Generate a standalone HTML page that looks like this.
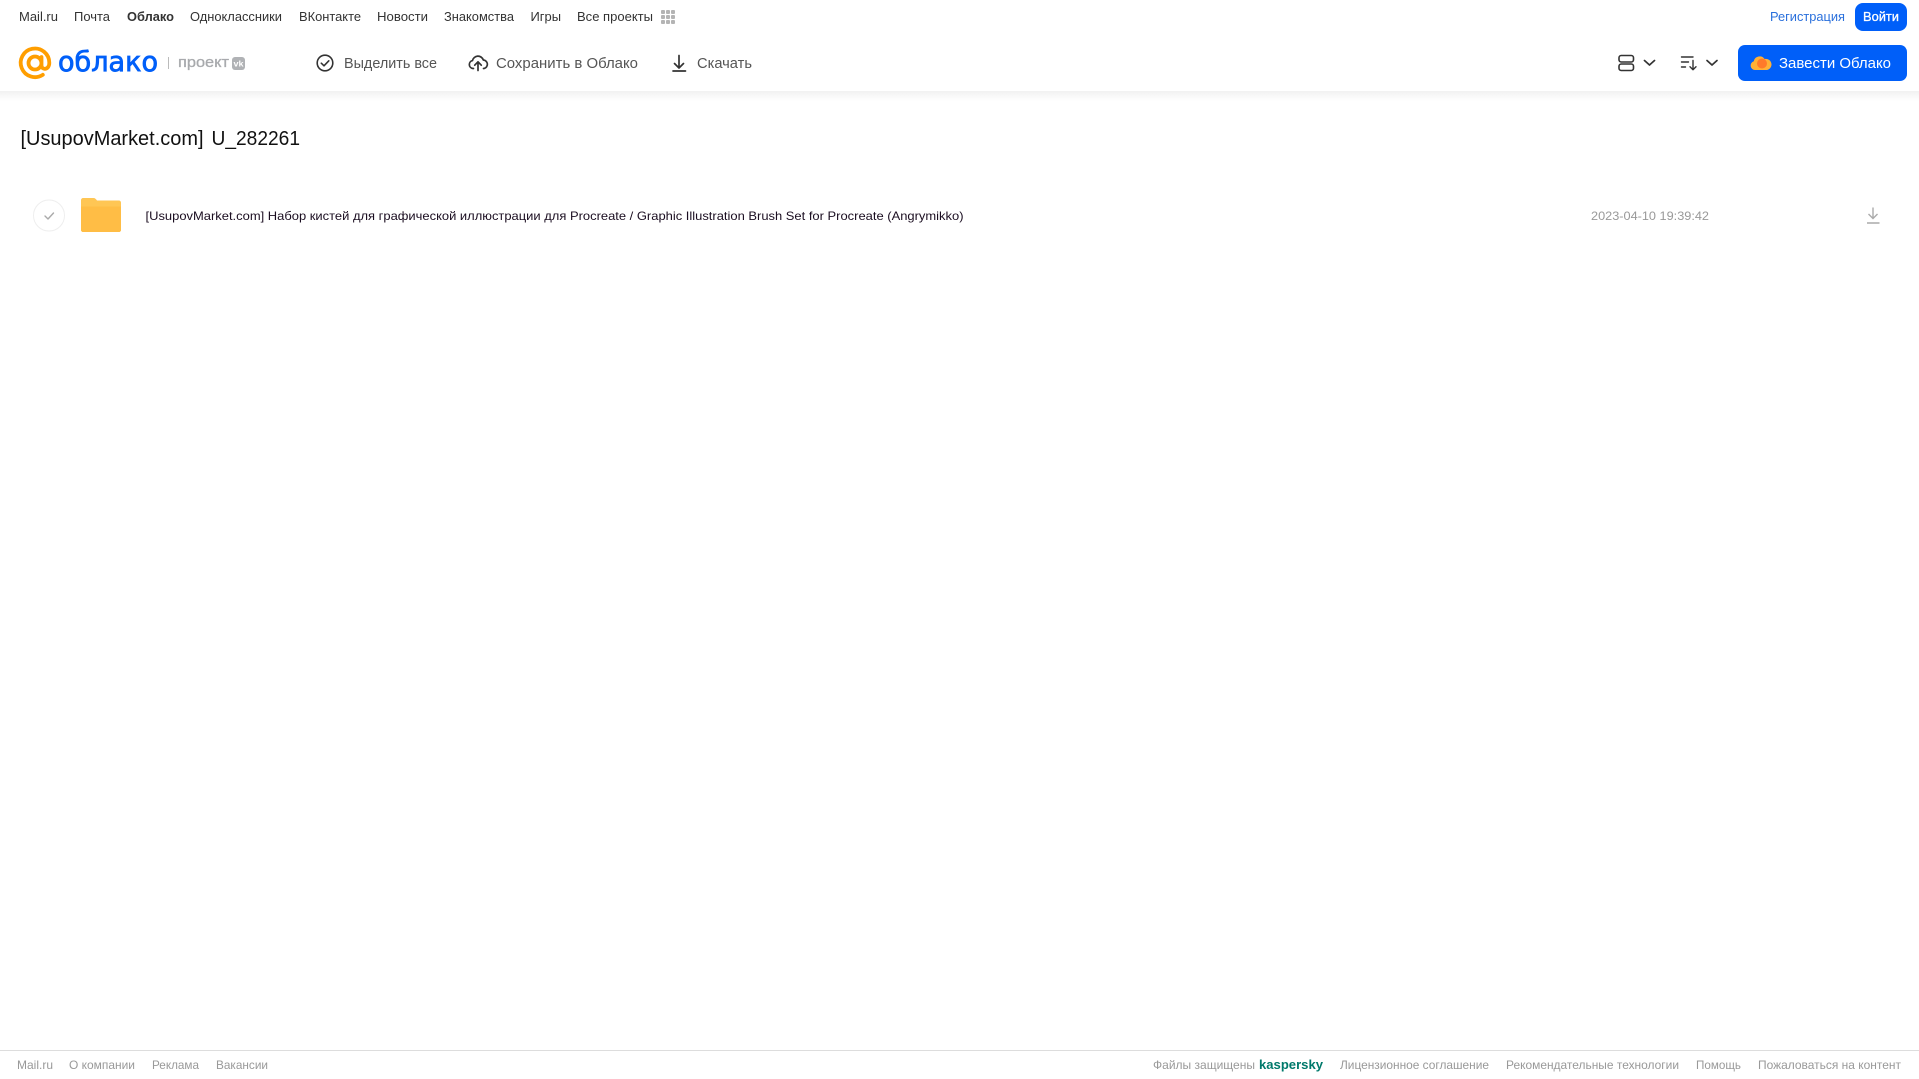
<!DOCTYPE html>
<html lang="ru"><head><meta charset="utf-8"><title>Облако</title>
<style>
html,body{margin:0;padding:0;background:#fff;width:1919px;height:1079px;overflow:hidden}
svg{display:block;position:absolute;left:0;top:0}
text{font-family:"Liberation Sans",sans-serif}
.n{font-size:13px;fill:#333}
.a{font-size:15px;fill:#555}
.f{font-size:12px;fill:#999}
</style></head><body>
<svg width="1919" height="1079" viewBox="0 0 1919 1079" xmlns="http://www.w3.org/2000/svg">
<defs><linearGradient id="s" x1="0" y1="0" x2="0" y2="1"><stop offset="0" stop-color="#f1f1f1"/><stop offset="1" stop-color="#fff"/></linearGradient></defs>
<rect x="0" y="91" width="1919" height="10" fill="url(#s)"/>

<text class="n" x="19" y="21" textLength="39" lengthAdjust="spacingAndGlyphs">Mail.ru</text>
<text class="n" x="74" y="21" textLength="36" lengthAdjust="spacingAndGlyphs">Почта</text>
<text class="n" x="127" y="21" textLength="47" lengthAdjust="spacingAndGlyphs" font-weight="bold">Облако</text>
<text class="n" x="190" y="21" textLength="92" lengthAdjust="spacingAndGlyphs">Одноклассники</text>
<text class="n" x="299" y="21" textLength="62" lengthAdjust="spacingAndGlyphs">ВКонтакте</text>
<text class="n" x="377" y="21" textLength="51" lengthAdjust="spacingAndGlyphs">Новости</text>
<text class="n" x="444" y="21" textLength="70" lengthAdjust="spacingAndGlyphs">Знакомства</text>
<text class="n" x="530.5" y="21" textLength="30.5" lengthAdjust="spacingAndGlyphs">Игры</text>
<text class="n" x="577" y="21" textLength="76" lengthAdjust="spacingAndGlyphs">Все проекты</text>
<g fill="#b4b4b4"><rect x="661" y="10" width="4" height="4" rx="1"/><rect x="666" y="10" width="4" height="4" rx="1"/><rect x="671" y="10" width="4" height="4" rx="1"/><rect x="661" y="15" width="4" height="4" rx="1"/><rect x="666" y="15" width="4" height="4" rx="1"/><rect x="671" y="15" width="4" height="4" rx="1"/><rect x="661" y="20" width="4" height="4" rx="1"/><rect x="666" y="20" width="4" height="4" rx="1"/><rect x="671" y="20" width="4" height="4" rx="1"/></g>

<text x="1770" y="21" font-size="13" fill="#2a70dc" textLength="75" lengthAdjust="spacingAndGlyphs">Регистрация</text>
<rect x="1855" y="3" width="52" height="28" rx="8" fill="#005ff9"/>
<text x="1863" y="21" font-size="13" fill="#fff" stroke="#fff" stroke-width=".3" textLength="36" lengthAdjust="spacingAndGlyphs">Войти</text>

<!-- logo -->
<path d="M41.500 63a6.500 6.500 0 1 1-13 0a6.500 6.500 0 1 1 13 0zM41.500 57v8.500c0 4.800 7.800 4.800 7.800-2.700a14.300 14.300 0 1 0-6.500 12" fill="none" stroke="#ff9e00" stroke-width="3.800" stroke-linecap="round"/>
<text x="58" y="71" style="font-family:'DejaVu Sans',sans-serif" font-size="28" fill="#005ff9" stroke="#005ff9" stroke-width=".8" textLength="100" lengthAdjust="spacingAndGlyphs">облако</text>
<rect x="168" y="57" width="1" height="12" fill="#bbb"/>
<text x="178" y="67" font-size="14.500" fill="#a8aaad" stroke="#a8aaad" stroke-width=".3" textLength="51" lengthAdjust="spacingAndGlyphs">проект</text>
<rect x="232" y="57" width="13" height="13" rx="3" fill="#b0b2b5"/>
<text x="233.500" y="66.500" font-size="8" font-weight="bold" fill="#fff" textLength="10" lengthAdjust="spacingAndGlyphs">vk</text>

<!-- actions -->
<circle cx="325" cy="63" r="7.800" fill="none" stroke="#333" stroke-width="1.600"/>
<path d="M321.300 63.200l2.700 2.600 4.800-5" fill="none" stroke="#333" stroke-width="1.600" stroke-linecap="round" stroke-linejoin="round"/>
<text class="a" x="344" y="68" textLength="93" lengthAdjust="spacingAndGlyphs">Выделить все</text>
<path d="M473.500 68.500h-.5a4 4 0 0 1-.5-7.900a5.600 5.600 0 0 1 10.800-.6a4.300 4.300 0 0 1 .7 8.500h-.5M478 70.500v-8.500M474.700 65.200l3.300-3.400 3.300 3.400" fill="none" stroke="#333" stroke-width="1.700" stroke-linecap="round" stroke-linejoin="round"/>
<text class="a" x="496" y="68" textLength="142" lengthAdjust="spacingAndGlyphs">Сохранить в Облако</text>
<path d="M679 55.500v12M674.500 63.500l4.500 4.500 4.500-4.500M673 71h12.500" fill="none" stroke="#333" stroke-width="1.700" stroke-linecap="round" stroke-linejoin="round"/>
<text class="a" x="697" y="68" textLength="55" lengthAdjust="spacingAndGlyphs">Скачать</text>

<!-- right controls -->
<rect x="1619" y="55.500" width="14.500" height="6.500" rx="2.200" fill="none" stroke="#333" stroke-width="1.600"/>
<rect x="1619" y="64" width="14.500" height="6.500" rx="2.200" fill="none" stroke="#333" stroke-width="1.600"/>
<path d="M1644.500 60.500l5 4.500 5-4.500" fill="none" stroke="#333" stroke-width="1.700" stroke-linecap="round" stroke-linejoin="round"/>
<path d="M1681.500 57h11.500M1681.500 62h7M1681.500 67h4M1693 60.500v9M1690 66.800l3 3 3-3" fill="none" stroke="#333" stroke-width="1.400" stroke-linecap="round" stroke-linejoin="round"/>
<path d="M1707 60.500l5 4.500 5-4.500" fill="none" stroke="#333" stroke-width="1.700" stroke-linecap="round" stroke-linejoin="round"/>
<rect x="1738" y="45" width="169" height="36" rx="7" fill="#005ff9"/>
<path d="M1755 70a4.500 4.500 0 0 1-1.200-8.800a6 6 0 0 1 10.800-2.200a5.500 5.500 0 0 1 2.500 11z" fill="#ffb136"/>
<circle cx="1762" cy="63.500" r="5" fill="#ff7a2a"/>
<text x="1779" y="68" font-size="15" fill="#fff" textLength="112" lengthAdjust="spacingAndGlyphs">Завести Облако</text>

<!-- title -->
<text x="20.500" y="145" font-size="20" fill="#111" textLength="183" lengthAdjust="spacingAndGlyphs">[UsupovMarket.com]</text>
<text x="211.500" y="145" font-size="20" fill="#111" textLength="88.500" lengthAdjust="spacingAndGlyphs">U_282261</text>

<!-- row -->
<circle cx="49" cy="215.500" r="15.500" fill="#fff" stroke="#eee" stroke-width="1"/>
<path d="M45 216l3 3 5.500-6" fill="none" stroke="#aaa" stroke-width="1.400" stroke-linecap="round" stroke-linejoin="round"/>
<path d="M83 198h10.500c1.500 0 2.500 1 3.500 2.500h22c1 0 2 1 2 2v27.500c0 1-1 2-2 2h-36c-1 0-2-1-2-2v-30c0-1 1-2 2-2z" fill="#ffc654"/>
<path d="M81 206.500h40v23.500c0 1-1 2-2 2h-36c-1 0-2-1-2-2z" fill="#ffbd45"/>
<text x="145.500" y="220" font-size="12" fill="#1a0d20" textLength="818" lengthAdjust="spacingAndGlyphs">[UsupovMarket.com] Набор кистей для графической иллюстрации для Procreate / Graphic Illustration Brush Set for Procreate (Angrymikko)</text>
<text x="1591" y="220" font-size="12" fill="#999" textLength="118" lengthAdjust="spacingAndGlyphs">2023-04-10 19:39:42</text>
<path d="M1873 207.500v11M1868.500 214l4.500 4.500 4.500-4.500M1867 223h12.500" fill="none" stroke="#aaa" stroke-width="1.400"/>

<!-- footer -->
<rect x="0" y="1050" width="1919" height="1" fill="#ddd"/>
<text class="f" x="17" y="1069" textLength="36" lengthAdjust="spacingAndGlyphs">Mail.ru</text>
<text class="f" x="69" y="1069" textLength="66" lengthAdjust="spacingAndGlyphs">О компании</text>
<text class="f" x="152" y="1069" textLength="47" lengthAdjust="spacingAndGlyphs">Реклама</text>
<text class="f" x="216" y="1069" textLength="52" lengthAdjust="spacingAndGlyphs">Вакансии</text>
<text class="f" x="1153" y="1069" textLength="102" lengthAdjust="spacingAndGlyphs">Файлы защищены</text>
<text x="1259" y="1069" font-size="13" font-weight="bold" fill="#00796b" textLength="64" lengthAdjust="spacingAndGlyphs">kaspersky</text>
<text class="f" x="1340" y="1069" textLength="149" lengthAdjust="spacingAndGlyphs">Лицензионное соглашение</text>
<text class="f" x="1506" y="1069" textLength="173" lengthAdjust="spacingAndGlyphs">Рекомендательные технологии</text>
<text class="f" x="1696" y="1069" textLength="45" lengthAdjust="spacingAndGlyphs">Помощь</text>
<text class="f" x="1758" y="1069" textLength="143" lengthAdjust="spacingAndGlyphs">Пожаловаться на контент</text>
</svg>
</body></html>
